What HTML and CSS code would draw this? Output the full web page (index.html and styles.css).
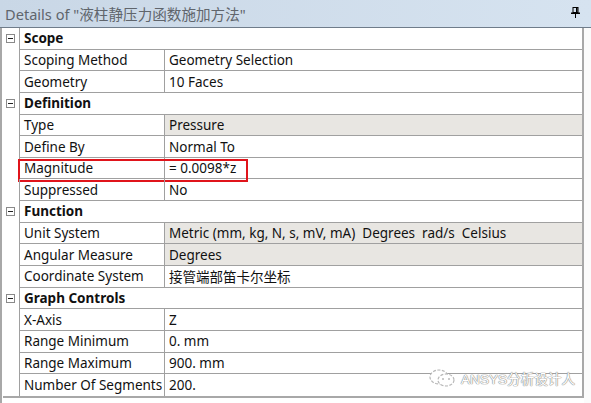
FILE: index.html
```html
<!DOCTYPE html>
<html>
<head>
<meta charset="utf-8">
<link rel="stylesheet" href="styles.css">
</head>
<body>
<div class="panel">
  <div class="titlebar">
    <span class="title">Details of "液柱静压力函数施加方法"</span>
    <svg class="pin" width="9" height="11" viewBox="0 0 9 11">
      <rect x="2" y="0.5" width="5" height="5" fill="none" stroke="#000" stroke-width="1"/>
      <rect x="5" y="1" width="1.5" height="4.5" fill="#000"/>
      <rect x="0" y="5.5" width="9" height="1.5" fill="#000"/>
      <rect x="4" y="7" width="1" height="4" fill="#000"/>
    </svg>
  </div>
  <div class="body">
    <div class="grid">
      <div class="cat"><span class="box"></span><span class="catname">Scope</span></div>
      <div class="row"><div class="k">Scoping Method</div><div class="v">Geometry Selection</div></div>
      <div class="row"><div class="k">Geometry</div><div class="v">10 Faces</div></div>

      <div class="cat"><span class="box"></span><span class="catname">Definition</span></div>
      <div class="row"><div class="k">Type</div><div class="v ro">Pressure</div></div>
      <div class="row"><div class="k">Define By</div><div class="v">Normal To</div></div>
      <div class="row hl"><div class="k">Magnitude</div><div class="v">= 0.0098*z</div><span class="redbox"></span></div>
      <div class="row"><div class="k">Suppressed</div><div class="v">No</div></div>

      <div class="cat"><span class="box"></span><span class="catname">Function</span></div>
      <div class="row"><div class="k">Unit System</div><div class="v ro">Metric (mm, kg, N, s, mV, mA)&nbsp; Degrees&nbsp; rad/s&nbsp; Celsius</div></div>
      <div class="row"><div class="k">Angular Measure</div><div class="v ro">Degrees</div></div>
      <div class="row"><div class="k">Coordinate System</div><div class="v">接管端部笛卡尔坐标</div></div>

      <div class="cat"><span class="box"></span><span class="catname">Graph Controls</span></div>
      <div class="row"><div class="k">X-Axis</div><div class="v">Z</div></div>
      <div class="row"><div class="k">Range Minimum</div><div class="v">0. mm</div></div>
      <div class="row"><div class="k">Range Maximum</div><div class="v">900. mm</div></div>
      <div class="row"><div class="k">Number Of Segments</div><div class="v">200.</div></div>
    </div>
  </div>
  <div class="watermark">
    <svg class="wm-icon" width="30" height="20" viewBox="0 0 30 20">
      <ellipse cx="11" cy="9" rx="9" ry="7" fill="#fff" stroke="#b8b8b8" stroke-width="1.2" stroke-dasharray="3 1.5"/>
      <ellipse cx="18" cy="12" rx="8" ry="6" fill="#fff" stroke="#b8b8b8" stroke-width="1.2" stroke-dasharray="3 1.5"/>
      <circle cx="15" cy="11" r="1" fill="#b8b8b8"/>
      <circle cx="21" cy="11" r="1" fill="#b8b8b8"/>
    </svg>
    <span class="wm-text">ANSYS分析设计人</span>
  </div>
</div>
</body>
</html>
```

FILE: styles.css
```css
* { box-sizing: border-box; }
html, body { margin: 0; padding: 0; }
body {
  width: 591px;
  height: 403px;
  background: #fbfbfb;
  font-family: "Noto Sans", "Noto Sans CJK SC", sans-serif;
  overflow: hidden;
}
.panel {
  position: relative;
  width: 591px;
  height: 403px;
}
.titlebar {
  height: 28px;
  background: linear-gradient(to right, #c9d7e6, #d6e3f0);
  border-bottom: 1px solid #6f7c8a;
  display: flex;
  align-items: center;
  justify-content: space-between;
  padding: 0 11px 0 5px;
}
.title {
  font-size: 14.6px;
  color: #60656c;
  margin-top: -1px;
}
.pin { margin-top: -3px; }
.body {
  width: 584px;
  height: 375px;
  border-left: 2px solid #a8a8a8;
  padding-left: 1px;
  background: #fff;
}
.grid {
  width: 581px;
  border-right: 2px solid #a8a8a8;
  border-bottom: 2px solid #a8a8a8;
  display: flex;
  flex-direction: column;
}
.cat, .row {
  height: 21.65px;
  display: flex;
  position: relative;
  font-size: 13.5px;
  color: #111;
}
.cat {
  align-items: center;
}
.box {
  width: 9px;
  height: 9px;
  border: 1px solid #8a8a8a;
  margin-left: 3px;
  margin-right: 4px;
  position: relative;
  background: #fff;
}
.box::after {
  content: "";
  position: absolute;
  left: 1px;
  top: 3px;
  width: 5px;
  height: 1px;
  background: #222;
}
.catname {
  flex: 1;
  height: 100%;
  border-left: 1px solid #a0a0a0;
  border-bottom: 1px solid #a0a0a0;
  padding-left: 4px;
  font-weight: bold;
  display: flex;
  align-items: center;
}
.row {
  padding-left: 16px;
}
.k {
  width: 145px;
  border-left: 1px solid #a0a0a0;
  border-bottom: 1px solid #a0a0a0;
  padding-left: 4px;
  display: flex;
  align-items: center;
  white-space: nowrap;
}
.v {
  flex: 1;
  border-left: 1px solid #a0a0a0;
  border-bottom: 1px solid #a0a0a0;
  padding-left: 4px;
  display: flex;
  align-items: center;
  white-space: nowrap;
}
.v.ro { background: #e8e6e2; }
.grid > .row:last-child .k,
.grid > .row:last-child .v { border-bottom: none; }
.redbox {
  position: absolute;
  left: 15px;
  top: 1px;
  width: 230px;
  height: 23px;
  border: 2px solid #e0141b;
  pointer-events: none;
}
.watermark {
  position: absolute;
  left: 428px;
  top: 368px;
  display: flex;
  align-items: center;
  gap: 3px;
}
.wm-text {
  font-family: "Liberation Sans", "Noto Sans CJK SC", sans-serif;
  font-size: 13.6px;
  color: #fff;
  text-shadow: 0 0 1px #8c8c8c, 0 0 1px #8c8c8c, 0 0 1px #8c8c8c;
}
```
